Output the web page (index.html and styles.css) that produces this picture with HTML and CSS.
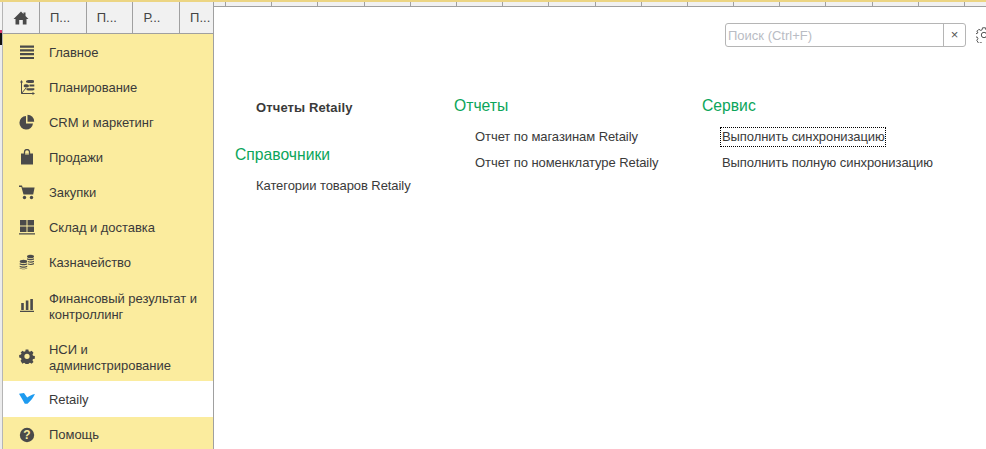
FILE: index.html
```html
<!DOCTYPE html>
<html lang="ru">
<head>
<meta charset="utf-8">
<title>Retaily</title>
<link rel="stylesheet" href="styles.css">
</head>
<body>
<div class="app">
  <div class="edge"></div>
  <div class="left">
    <div class="tabs">
      <div class="tab tab-home">
        <svg width="16" height="14" viewBox="0 0 16 14"><path d="M8 0.5 L10.5 3 V1.5 H12.5 V5 L15.5 8 H13.5 V13.5 H9.8 V9 H6.2 V13.5 H2.5 V8 H0.5 Z" fill="#4a4a4a"/></svg>
      </div>
      <div class="tab">П...</div>
      <div class="tab">П...</div>
      <div class="tab">Р...</div>
      <div class="tab tab-last">П...</div>
    </div>
    <nav class="side">
      <div class="item">
        <svg class="ico" width="16" height="16" viewBox="0 0 16 16"><path d="M1 1.500h14v2.200H1zM1 5.300h14v2.200H1zM1 9.100h14v2.200H1zM1 12.900h14v2.200H1z" fill="#4a4a4a"/></svg>
        <span>Главное</span>
      </div>
      <div class="item">
        <svg class="ico" width="16" height="16" viewBox="0 0 16 16"><path d="M2.500 2v12.500H15M2.500 14.500L7 9" fill="none" stroke="#4a4a4a" stroke-width="1"/><path d="M1 3.500L2.500 1 4 3.500zM13.500 13l2.500 1.500-2.500 1.500z" fill="#4a4a4a"/><path d="M7 2.200c0-1 5-1.500 8-.7v2c-2 .8-7 .8-8-.2zM4.800 6c.6-1 4-1 5 0v1.800c-1 .8-4 .8-5 0zM10.500 5.500h4.800v1.900h-4.800zM7.500 9.200h7.800v1.700c-2 .7-6 .7-7.800 0z" fill="#4a4a4a"/></svg>
        <span>Планирование</span>
      </div>
      <div class="item">
        <svg class="ico" width="16" height="16" viewBox="0 0 16 16"><path d="M7 2a6.800 6.800 0 1 0 7 7.500H7z" fill="#4a4a4a"/><path d="M8.500 .8a6.700 6.700 0 0 1 6.700 7H8.500z" fill="#4a4a4a"/></svg>
        <span>CRM и маркетинг</span>
      </div>
      <div class="item">
        <svg class="ico" width="16" height="16" viewBox="0 0 16 16"><path d="M2 4.500h12v11H2z" fill="#4a4a4a"/><path d="M5.500 7V3a2.500 2.500 0 0 1 5 0v4" fill="none" stroke="#4a4a4a" stroke-width="1.300"/><path d="M6.100 4.500h3.800v1H6.100z" fill="#fbec9e"/></svg>
        <span>Продажи</span>
      </div>
      <div class="item">
        <svg class="ico" width="16" height="16" viewBox="0 0 16 16"><path d="M0 1.500h3l.6 2h12l-1.400 7H4.500L2.400 3H0z" fill="#4a4a4a"/><circle cx="5.500" cy="13.500" r="1.700" fill="#4a4a4a"/><circle cx="12.500" cy="13.500" r="1.700" fill="#4a4a4a"/></svg>
        <span>Закупки</span>
      </div>
      <div class="item">
        <svg class="ico" width="16" height="16" viewBox="0 0 16 16"><path d="M1 1h6.500v5.500H1zM8.500 1H15v5.500H8.500zM1 7.500h6.500V13H1zM8.500 7.500H15V13H8.500zM0 14.200h16v1.300H0z" fill="#4a4a4a"/></svg>
        <span>Склад и доставка</span>
      </div>
      <div class="item">
        <svg class="ico" width="16" height="16" viewBox="0 0 16 16"><ellipse cx="11.500" cy="2.500" rx="3.500" ry="1.800" fill="#4a4a4a"/><path d="M8 4.300c1.500 1 5.500 1 7 0v1.200c-1.500 1-5.500 1-7 0zM9 7c2 .8 4.500.6 6-.3v1.200c-1.500.9-4 1-6 .3zM9 9.500c2 .7 4.500.5 6-.4v1.200c-1.500.9-4 1-6 .3z" fill="#4a4a4a"/><ellipse cx="4.500" cy="7.500" rx="3.800" ry="1.700" fill="#4a4a4a"/><path d="M.7 9.300c1.500 1 6 1 7.500 0v1.300c-1.500 1-6 1-7.500 0zM.7 11.700c1.500 1 6 1 7.500 0V13c-1.500 1-6 1-7.500 0zM.7 14c1.500 1 6 1 7.500 0v.6c-1.500 1-6 1-7.500 0z" fill="#4a4a4a"/></svg>
        <span>Казначейство</span>
      </div>
      <div class="item item-tall">
        <svg class="ico" width="16" height="16" viewBox="0 0 16 16"><path d="M2.200 6h2.600v7H2.200zM6.800 3.500h2.600V13H6.800zM11.300 2h2.600v11h-2.600zM1 13.800h14v1.200H1z" fill="#4a4a4a"/></svg>
        <span>Финансовый результат и контроллинг</span>
      </div>
      <div class="item item-tall">
        <svg class="ico" width="16" height="16" viewBox="0 0 16 16"><path fill-rule="evenodd" d="M6.500 .8h3l.4 2 1.400.6 1.800-1.100 2.100 2.100-1.100 1.800.6 1.400 2 .4v3l-2 .4-.6 1.400 1.100 1.800-2.100 2.100-1.800-1.100-1.400.6-.4 2h-3l-.4-2-1.400-.6-1.800 1.100L.8 13.400l1.100-1.800-.6-1.400-2-.4v-3l2-.4.600-1.400L.8 4.400l2.100-2.100 1.800 1.100 1.400-.6zM8 5.500a2.900 2.900 0 1 0 0 5.800 2.900 2.900 0 0 0 0-5.800z" fill="#4a4a4a" transform="translate(.8 .8) scale(.9)"/></svg>
        <span>НСИ и администрирование</span>
      </div>
      <div class="item item-active">
        <svg class="ico" width="16" height="16" viewBox="0 0 16 16"><path d="M0 2.800 L5 2 L8.200 6.500 C10 5 13 3.500 16 3 C14.500 6.500 11.500 10 8.500 12.800 L5.800 12.800 C4 9.500 2 6 0 2.800 Z" fill="#1e9bf0"/></svg>
        <span>Retaily</span>
      </div>
      <div class="item item-last">
        <svg class="ico" width="16" height="16" viewBox="0 0 16 16"><circle cx="8" cy="8" r="7.200" fill="#4a4a4a"/><text x="8" y="12.200" class="help-mark">?</text></svg>
        <span>Помощь</span>
      </div>
    </nav>
  </div>
  <div class="right">
    <div class="ticks">
      <i class="t t0"></i><i class="t"></i><i class="t"></i><i class="t"></i><i class="t"></i><i class="t"></i><i class="t"></i><i class="t"></i><i class="t"></i><i class="t"></i><i class="t"></i><i class="t"></i><i class="t"></i><i class="t"></i><i class="t"></i><i class="t"></i><i class="t"></i>
    </div>
    <main class="main">
      <div class="toolbar">
        <div class="search">
          <div class="search-input">Поиск (Ctrl+F)</div>
          <div class="search-clear">×</div>
        </div>
        <svg class="gear" width="16" height="16" viewBox="0 0 16 16"><path fill-rule="evenodd" d="M6.500 .8h3l.4 2 1.400.6 1.800-1.100 2.100 2.100-1.100 1.800.6 1.400 2 .4v3l-2 .4-.6 1.400 1.100 1.800-2.100 2.100-1.800-1.100-1.400.6-.4 2h-3l-.4-2-1.400-.6-1.800 1.100L.8 13.400l1.100-1.800-.6-1.400-2-.4v-3l2-.4.600-1.400L.8 4.400l2.100-2.100 1.800 1.100 1.400-.6z" fill="none" stroke="#555" stroke-width="1"/><circle cx="8" cy="8" r="2.700" fill="none" stroke="#555"/></svg>
      </div>
      <div class="cols">
        <section class="col col-1">
          <div class="link link-bold">Отчеты Retaily</div>
          <h2 class="head head-lower">Справочники</h2>
          <div class="link">Категории товаров Retaily</div>
        </section>
        <section class="col col-2">
          <h2 class="head">Отчеты</h2>
          <div class="link">Отчет по магазинам Retaily</div>
          <div class="link">Отчет по номенклатуре Retaily</div>
        </section>
        <section class="col col-3">
          <h2 class="head">Сервис</h2>
          <div class="link link-focus">Выполнить синхронизацию</div>
          <div class="link">Выполнить полную синхронизацию</div>
        </section>
      </div>
    </main>
  </div>
</div>
</body>
</html>
```
FILE: styles.css
```css
* { box-sizing: border-box; }
html, body { margin: 0; height: 100%; }
body {
  background: #fff;
  font-family: "Liberation Sans", Arial, sans-serif;
  font-size: 13px;
  color: #3a3a3a;
  overflow: hidden;
}
.app {
  display: flex;
  width: 986px;
  height: 449px;
  overflow: hidden;
  border-top: 2px solid #ecd583;
}
.edge {
  width: 2px;
  flex: none;
  background: linear-gradient(#f4f4f4 0 28px, #d83a6a 28px 31px, #111 31px 43px, #ececec 43px);
}
.left {
  width: 212px;
  flex: none;
  display: flex;
  flex-direction: column;
  border-left: 1px solid #b5b5b5;
  border-right: 1px solid #a0a0a0;
}
.tabs {
  display: flex;
  height: 32px;
  flex: none;
  background: #f1f1f1;
  border-bottom: 1px solid #a0a0a0;
}
.tab {
  width: 46.700px;
  flex: none;
  display: flex;
  align-items: center;
  padding-left: 10px;
  color: #444;
  border-right: 1px solid #a0a0a0;
}
.tab-home {
  width: 37px;
  justify-content: center;
  padding-left: 0;
  padding-top: 1px;
}
.tab-last { border-right: 0; width: 34px; }
.side {
  flex: 1;
  background: #fbec9e;
}
.item {
  display: flex;
  align-items: center;
  height: 35px;
  padding-right: 12px;
  line-height: 16px;
  letter-spacing: -0.04px;
}
.item span { margin-top: 2px; }
.item-tall { height: 51px; }
.item-tall span { margin-top: 5px; }
.item-active { height: 36px; background: #fff; }
.item-active span, .item-last span { margin-top: 1px; }
.ico {
  flex: none;
  margin: 0 14px 0 16px;
}
.help-mark {
  font-family: "Liberation Sans", Arial, sans-serif;
  font-size: 12px;
  font-weight: 700;
  fill: #fbec9e;
  text-anchor: middle;
}
.right {
  flex: 1;
  min-width: 0;
  display: flex;
  flex-direction: column;
}
.ticks {
  display: flex;
  height: 4px;
  flex: none;
  overflow: hidden;
  background: #f1f1f1;
}
.t {
  width: 46.200px;
  flex: none;
  border-right: 1px solid #a0a0a0;
}
.t0 { width: 12px; }
.main {
  flex: 1;
  background: #fff;
  border-top: 1px solid #a0a0a0;
  overflow: hidden;
}
.toolbar {
  display: flex;
  align-items: center;
  width: 800px;
  padding: 16px 0 0 511px;
}
.search {
  display: flex;
  flex: none;
  width: 241px;
  height: 24px;
  border: 1px solid #b5b5b5;
  border-radius: 3px;
}
.search-input {
  flex: 1;
  padding: 1px 0 0 2px;
  line-height: 22px;
  color: #b9bcc4;
  border-right: 1px solid #b5b5b5;
}
.search-clear {
  width: 21px;
  text-align: center;
  line-height: 22px;
  color: #555;
}
.gear { flex: none; margin-left: 10px; }
.cols {
  display: flex;
  padding-top: 51px;
}
.col { flex: none; }
.col-1 { width: 240px; padding-left: 21px; }
.col-2 { width: 248px; }
.col-3 { width: 284px; }
.col-2 .head, .col-3 .head { margin-top: -1px; margin-bottom: 14px; }
.head {
  margin: 0 0 13px;
  font-size: 15.700px;
  font-weight: 400;
  line-height: 18px;
  color: #0ba55a;
}
.head-lower { margin-top: 30px; margin-bottom: 14px; }
.link {
  margin-left: 21px;
  line-height: 16px;
  margin-bottom: 10px;
  white-space: nowrap;
  letter-spacing: -0.07px;
}
.col-3 .link { margin-left: 20px; }
.link-bold { font-weight: 700; margin-top: 2px; margin-bottom: 0; letter-spacing: 0.12px; }
.col-3 .link-focus {
  width: fit-content;
  margin-left: 18px;
  margin-top: -2px;
  margin-bottom: 8px;
  padding: 2px 1px 2px 2px;
  outline: 1px dotted #000;
  outline-offset: -1px;
}
```
